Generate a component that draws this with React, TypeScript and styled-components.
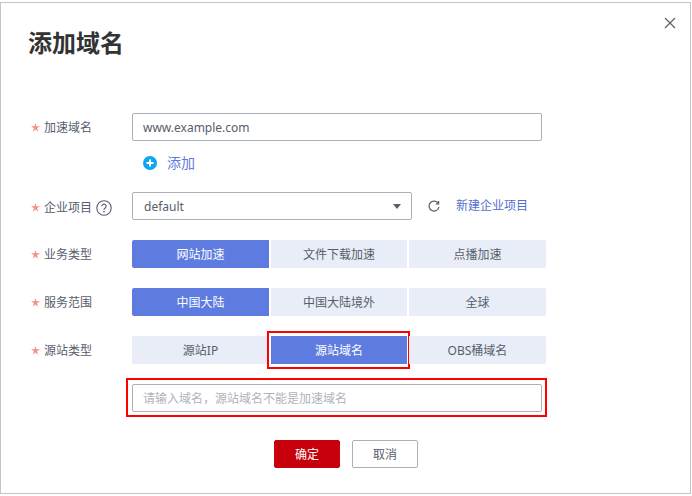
import React from "react";
import styled, { createGlobalStyle } from "styled-components";

const Global = createGlobalStyle`
  html, body { margin: 0; padding: 0; background: #fff; }
  body { font-family: "Noto Sans", "Noto Sans CJK SC", sans-serif; font-size: 12px; }
  * { box-sizing: border-box; }
`;

const Dialog = styled.div`
  position: relative;
  margin-top: 2px;
  width: 691px;
  height: 492px;
  border: 1px solid #c4c4c4;
  padding: 0 0 0 27px;
`;

const Title = styled.h1`
  margin: 0;
  height: 76px;
  padding-top: 18px;
  font-size: 24px;
  line-height: 42px;
  font-weight: 700;
  color: #333;
  font-family: "Noto Sans CJK SC", sans-serif;
`;

const Close = styled.button`
  position: absolute;
  top: 13px;
  right: 13px;
  width: 14px;
  height: 14px;
  padding: 0;
  border: 0;
  background: none;
  color: #5a5f6b;
  display: flex;
`;

const Form = styled.div`
  margin-top: 34px;
  display: flex;
  flex-direction: column;
`;

const Row = styled.div<{ $gap?: number }>`
  display: flex;
  align-items: center;
  height: 28px;
  margin-bottom: ${(p) => p.$gap ?? 20}px;
`;

const Label = styled.div<{ $drop?: number }>`
  width: 104px;
  height: 16px;
  flex: none;
  display: flex;
  align-items: center;
  color: #575d6c;
  line-height: 16px;
  position: relative;
  top: ${(p) => p.$drop ?? 1}px;
`;

const Star = styled.span`
  width: 16px;
  height: 10px;
  display: flex;
  padding-left: 3px;
`;

const Help = styled.span`
  margin-left: 4px;
  display: flex;
  color: #575d6c;
`;

const Field = styled.div<{ $w: number; $placeholder?: boolean; $pad?: number }>`
  width: ${(p) => p.$w}px;
  height: 28px;
  border: 1px solid #adb0b8;
  border-radius: 2px;
  padding: 0 10px 0 ${(p) => p.$pad ?? 10}px;
  display: flex;
  align-items: center;
  justify-content: space-between;
  color: ${(p) => (p.$placeholder ? "#b0b3bb" : "#575d6c")};
  background: #fff;
`;

const Caret = styled.span`
  width: 0;
  height: 0;
  border-left: 4px solid transparent;
  border-right: 4px solid transparent;
  border-top: 5px solid #575d6c;
`;

const AddLine = styled.div`
  display: flex;
  align-items: center;
  height: 16px;
  margin: 14px 0 21px 115px;
  gap: 10px;
  font-size: 14px;
  color: #5e7ce0;
  line-height: 16px;
`;

const Refresh = styled.span`
  display: flex;
  margin-left: 16px;
  color: #575d6c;
`;

const Link = styled.a`
  margin-left: 16px;
  color: #526ecc;
  position: relative;
  top: -1px;
`;

const Segments = styled.div`
  display: flex;
  gap: 2px;
`;

const Segment = styled.div<{ $on?: boolean; $mark?: boolean; $w: number; $first?: boolean; $last?: boolean }>`
  position: relative;
  width: ${(p) => p.$w}px;
  height: 28px;
  display: flex;
  align-items: center;
  justify-content: center;
  background: ${(p) => (p.$on ? "#5e7ce0" : "#e9edf8")};
  color: ${(p) => (p.$on ? "#fff" : "#575d6c")};
  border-radius: ${(p) => (p.$first ? "2px 0 0 2px" : p.$last ? "0 2px 2px 0" : "0")};
  ${(p) =>
    p.$mark
      ? `&::after {
          content: "";
          position: absolute;
          inset: -5px -3px -5px -4px;
          border: 2px solid #f00;
        }`
      : ""}
`;

const Marked = styled.div`
  position: relative;
  display: flex;
  &::after {
    content: "";
    position: absolute;
    inset: -6px -5px -5px -6px;
    border: 2px solid #f00;
    pointer-events: none;
  }
`;

const Footer = styled.div`
  display: flex;
  gap: 12px;
  margin: 0 0 0 246px;
`;

const Button = styled.button<{ $primary?: boolean }>`
  width: 66px;
  height: 28px;
  padding: 0;
  border-radius: 2px;
  font: inherit;
  border: 1px solid ${(p) => (p.$primary ? "#c7000b" : "#adb0b8")};
  background: ${(p) => (p.$primary ? "#c7000b" : "#fff")};
  color: ${(p) => (p.$primary ? "#fff" : "#575d6c")};
`;

const groups = [
  { label: "业务类型", items: ["网站加速", "文件下载加速", "点播加速"], on: 0 },
  { label: "服务范围", items: ["中国大陆", "中国大陆境外", "全球"], on: 0 },
  { label: "源站类型", items: ["源站IP", "源站域名", "OBS桶域名"], on: 1, mark: 1 },
];
const widths = [137, 136, 137];

const StarIcon = () => (
  <Star>
    <svg width="9" height="9" viewBox="0 0 9 9" fill="#f88e8a">
      <path d="M4.5 0l.9 3.3H9L6 5.2 7.3 8.8 4.5 6.5 1.7 8.8 3 5.2 0 3.3h3.6z" />
    </svg>
  </Star>
);

export default function App() {
  return (
    <Dialog>
      <Global />
      <Title>添加域名</Title>
      <Close aria-label="关闭">
        <svg width="14" height="14" viewBox="0 0 14 14" fill="none" stroke="currentColor" strokeWidth="1.2">
          <path d="M2 2l10 10M12 2L2 12" />
        </svg>
      </Close>
      <Form>
        <Row $gap={0}>
          <Label><StarIcon />加速域名</Label>
          <Field $w={410}>www.example.com</Field>
        </Row>
        <AddLine>
          <svg width="14" height="14" viewBox="0 0 14 14">
            <circle cx="7" cy="7" r="7" fill="#0ea5f2" />
            <path d="M7 3.5v7M3.5 7h7" stroke="#fff" strokeWidth="2" />
          </svg>
          添加
        </AddLine>
        <Row>
          <Label $drop={2}>
            <StarIcon />企业项目
            <Help>
              <svg width="16" height="16" viewBox="0 0 16 16" fill="none" stroke="currentColor">
                <circle cx="8" cy="8" r="7.2" strokeWidth="1.1" />
                <path d="M5.9 6.2a2.1 2.1 0 1 1 3.3 1.7c-.8.5-1.2.9-1.2 1.8" strokeWidth="1.2" />
                <path d="M8 11v1.4" strokeWidth="1.3" />
              </svg>
            </Help>
          </Label>
          <Field $w={280} $pad={11}>default<Caret /></Field>
          <Refresh>
            <svg width="12" height="12" viewBox="0 0 12 12" fill="none" stroke="currentColor" strokeWidth="1.2">
              <path d="M10.3 3.4A5 5 0 1 0 11 7" />
              <path d="M10.6 1v2.8H7.9" />
            </svg>
          </Refresh>
          <Link>新建企业项目</Link>
        </Row>
        {groups.map((g) => (
          <Row key={g.label}>
            <Label><StarIcon />{g.label}</Label>
            <Segments>
              {g.items.map((t, i) => (
                <Segment key={t} $w={widths[i]} $on={g.on === i} $mark={g.mark === i} $first={i === 0} $last={i === 2}>
                  {t}
                </Segment>
              ))}
            </Segments>
          </Row>
        ))}
        <Row $gap={28}>
          <Label />
          <Marked>
            <Field $w={410} $placeholder>请输入域名，源站域名不能是加速域名</Field>
          </Marked>
        </Row>
        <Footer>
          <Button $primary>确定</Button>
          <Button>取消</Button>
        </Footer>
      </Form>
    </Dialog>
  );
}
